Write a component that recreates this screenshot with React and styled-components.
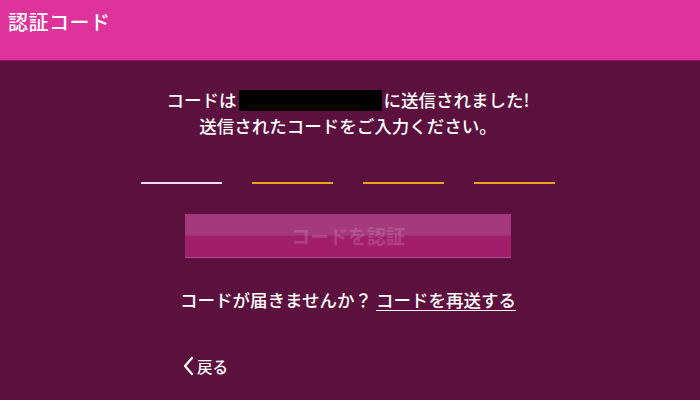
import React from 'react';
import styled, { createGlobalStyle } from 'styled-components';

const GlobalStyle = createGlobalStyle`
  html, body {
    margin: 0;
    padding: 0;
    background: #5b103e;
  }
  body {
    font-family: "Noto Sans CJK JP", "Noto Sans", sans-serif;
    color: #ffffff;
  }
`;

const Page = styled.div`
  width: 700px;
  height: 400px;
  display: flex;
  flex-direction: column;
  background: #5b103e;
  overflow: hidden;
`;

const Header = styled.header`
  height: 61px;
  flex-shrink: 0;
  display: flex;
  align-items: flex-start;
  padding: 8px 0 0 8px;
  box-sizing: border-box;
  background: #dd339b;
  border-bottom: 1px solid #8a1a5e;
`;

const Title = styled.h1`
  margin: 0;
  font-size: 20px;
  font-weight: 500;
  line-height: 28px;
  letter-spacing: 0.5px;
`;

const Main = styled.main`
  display: flex;
  flex-direction: column;
  align-items: center;
  padding: 26px 4px 0 0;
`;

const Message = styled.p`
  margin: 0;
  font-size: 17.5px;
  font-weight: 500;
  line-height: 26px;
  text-align: center;
  white-space: nowrap;
`;

const Redacted = styled.span`
  display: inline-block;
  width: 143px;
  height: 21px;
  background: #000;
  vertical-align: -4px;
  margin: 0 1px 0 3px;
`;

const CodeRow = styled.div`
  display: flex;
  gap: 30px;
  margin-top: 15px;
`;

const CodeInput = styled.input`
  width: 81px;
  height: 30px;
  box-sizing: border-box;
  border: none;
  border-bottom: 2px solid ${(p) => (p.$active ? '#f2dcf0' : '#eea021')};
  background: transparent;
  color: #fff;
  font-size: 18px;
  text-align: center;
  outline: none;
  padding: 0;
`;

const Column = styled.div`
  width: 326px;
  display: flex;
  flex-direction: column;
  align-items: center;
`;

const VerifyButton = styled.button`
  width: 326px;
  height: 44px;
  margin-top: 30px;
  border: none;
  border-bottom: 1px solid #b84a8c;
  background: linear-gradient(to bottom, #a43a7c 0%, #a43a7c 48%, #a11e6b 52%, #a11e6b 100%);
  color: rgba(255, 255, 255, 0.16);
  font-family: inherit;
  font-size: 19px;
  font-weight: 600;
  cursor: default;
`;

const Resend = styled.p`
  margin: 30px 0 0;
  font-size: 17.5px;
  font-weight: 500;
  line-height: 24px;
  white-space: nowrap;
`;

const ResendLink = styled.a`
  color: #fff;
  text-decoration: underline;
  text-underline-offset: 3px;
  cursor: pointer;
`;

const Back = styled.a`
  align-self: flex-start;
  display: flex;
  align-items: center;
  gap: 2px;
  margin-top: 42px;
  margin-left: -3px;
  font-size: 15.5px;
  font-weight: 500;
  line-height: 24px;
  color: #fff;
  cursor: pointer;
`;

const Chevron = () => (
  <svg width="13" height="20" viewBox="0 0 13 20">
    <path d="M10 2 L3 10 L10 18" stroke="#fff" strokeWidth="2.2" fill="none" strokeLinecap="round" strokeLinejoin="round" />
  </svg>
);

export default function App() {
  return (
    <Page>
      <GlobalStyle />
      <Header>
        <Title>認証コード</Title>
      </Header>
      <Main>
        <Message>
          コードは<Redacted />に送信されました!
          <br />
          送信されたコードをご入力ください。
        </Message>
        <CodeRow>
          <CodeInput $active maxLength={1} />
          <CodeInput maxLength={1} />
          <CodeInput maxLength={1} />
          <CodeInput maxLength={1} />
        </CodeRow>
        <Column>
          <VerifyButton disabled>コードを認証</VerifyButton>
          <Resend>
            コードが届きませんか？ <ResendLink>コードを再送する</ResendLink>
          </Resend>
          <Back>
            <Chevron />
            戻る
          </Back>
        </Column>
      </Main>
    </Page>
  );
}
